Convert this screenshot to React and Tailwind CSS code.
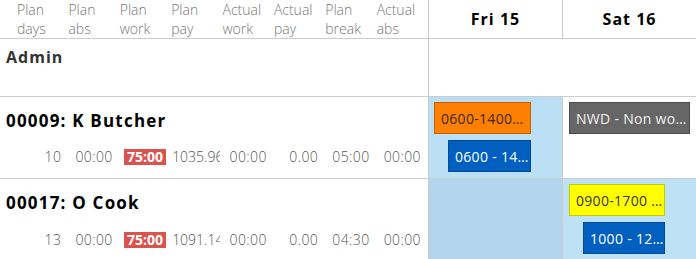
import React from "react";

const headers = [
  ["Plan", "days"],
  ["Plan", "abs"],
  ["Plan", "work"],
  ["Plan", "pay"],
  ["Actual", "work"],
  ["Actual", "pay"],
  ["Plan", "break"],
  ["Actual", "abs"],
];

function Values({ v }) {
  return (
    <div className="grid grid-cols-8 pl-[17px] text-[14px] leading-[20px] font-light text-[#555] tracking-[0.4px]">
      {v.map((x, i) =>
        i === 2 ? (
          <div key={i} className="flex justify-end pr-[5px]">
            <span className="bg-[#d9534f] text-white font-bold px-[3px] leading-[16px] my-[2px] tracking-normal">{x}</span>
          </div>
        ) : i === 3 ? (
          <div key={i} className="pr-[3px]">
            <div className="whitespace-nowrap overflow-hidden pl-[1px] tracking-normal">{x}</div>
          </div>
        ) : (
          <div key={i} className="pr-[7px]">
            <div className="text-right whitespace-nowrap">{x}</div>
          </div>
        )
      )}
    </div>
  );
}

function Shift({ cls, w, ml, children }) {
  return (
    <div
      className={`h-[32px] border flex items-center px-[6px] text-[14px] tracking-[0.3px] whitespace-nowrap ${cls}`}
      style={{ width: w, marginLeft: ml }}
    >
      {children}
    </div>
  );
}

export default function App() {
  return (
    <div className="w-[696px] h-[259px] overflow-hidden bg-white font-['Open_Sans',sans-serif] text-[#222]">
      {/* header */}
      <div className="flex border-b border-[#ccc] h-[39px]">
        <div className="w-[429px] border-r border-[#ccc] grid grid-cols-8 pl-[17px] pt-[0px] text-[14px] leading-[19px] font-light text-[#777]">
          {headers.map((h, i) => (
            <div key={i}>
              <div>{h[0]}</div>
              <div>{h[1]}</div>
            </div>
          ))}
        </div>
        <div className="w-[134px] border-r border-[#ccc] flex items-center justify-center font-bold text-[16px] tracking-[1px] text-black">Fri 15</div>
        <div className="w-[133px] flex items-center justify-center font-bold text-[16px] tracking-[1px] text-black">Sat 16</div>
      </div>
      {/* admin */}
      <div className="flex border-b border-[#ccc] h-[58px]">
        <div className="w-[429px] border-r border-[#ccc] pl-[6px] pt-[6px]">
          <div className="text-[16px] leading-[24px] font-bold tracking-[1px] text-[#333]">Admin</div>
        </div>
        <div className="flex-1"></div>
      </div>
      {/* butcher */}
      <div className="flex border-b border-[#ccc] h-[82px]">
        <div className="w-[429px] border-r border-[#ccc] pt-[12px]">
          <div className="pl-[6px] text-[17px] leading-[24px] font-bold tracking-[1.2px] text-black">00009: K Butcher</div>
          <div className="mt-[14px]">
            <Values v={["10", "00:00", "75:00", "1035.96", "00:00", "0.00", "05:00", "00:00"]} />
          </div>
        </div>
        <div className="w-[134px] border-r border-[#ccc] bg-[#bbe0f5] pt-[5px] flex flex-col gap-[6px]">
          <Shift cls="bg-[#ff7f00] border-[#c86000] text-[#3a2a10]" w={97} ml={5}>0600-1400…</Shift>
          <Shift cls="bg-[#005fbf] border-[#004a99] text-white" w={83} ml={19}>0600 - 14…</Shift>
        </div>
        <div className="w-[133px] pt-[5px]">
          <Shift cls="bg-[#666666] border-[#4a4a4a] text-[#f0f0f0]" w={121} ml={6}>NWD - Non wo…</Shift>
        </div>
      </div>
      {/* cook */}
      <div className="flex h-[82px]">
        <div className="w-[429px] border-r border-[#ccc] pt-[12px]">
          <div className="pl-[6px] text-[17px] leading-[24px] font-bold tracking-[1.2px] text-black">00017: O Cook</div>
          <div className="mt-[15px]">
            <Values v={["13", "00:00", "75:00", "1091.14", "00:00", "0.00", "04:30", "00:00"]} />
          </div>
        </div>
        <div className="w-[134px] border-r border-[#ccc] bg-[#b3d5ed]"></div>
        <div className="w-[133px] bg-[#bde2f6] pt-[5px] flex flex-col gap-[6px]">
          <Shift cls="bg-[#ffff00] border-[#c8c800] text-[#333]" w={96} ml={6}>0900-1700 …</Shift>
          <Shift cls="bg-[#005fbf] border-[#004a99] text-white" w={82} ml={20}>1000 - 12…</Shift>
        </div>
      </div>
    </div>
  );
}
